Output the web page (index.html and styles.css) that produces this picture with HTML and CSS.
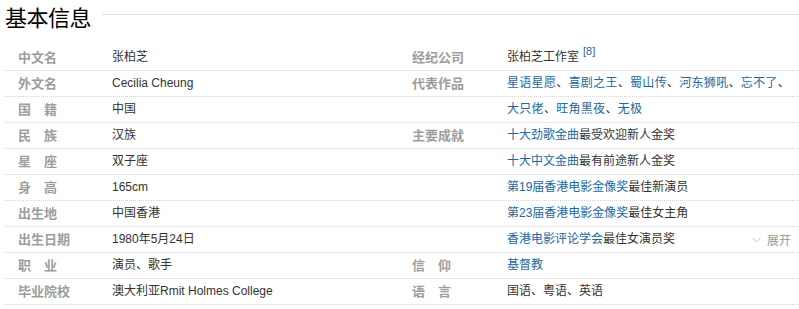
FILE: index.html
```html
<!DOCTYPE html>
<html lang="zh-CN">
<head>
<meta charset="utf-8">
<title>基本信息</title>
<link rel="stylesheet" href="styles.css">
</head>
<body>
<div class="page">
  <div class="head">
    <h2 class="title">基本信息</h2>
    <div class="head-line"></div>
  </div>
  <div class="info">
    <dl class="col col-left">
      <div class="row"><dt class="lbl">中文名</dt><dd class="val">张柏芝</dd></div>
      <div class="row"><dt class="lbl">外文名</dt><dd class="val">Cecilia Cheung</dd></div>
      <div class="row"><dt class="lbl sp">国籍</dt><dd class="val">中国</dd></div>
      <div class="row"><dt class="lbl sp">民族</dt><dd class="val">汉族</dd></div>
      <div class="row"><dt class="lbl sp">星座</dt><dd class="val">双子座</dd></div>
      <div class="row"><dt class="lbl sp">身高</dt><dd class="val">165cm</dd></div>
      <div class="row"><dt class="lbl">出生地</dt><dd class="val">中国香港</dd></div>
      <div class="row"><dt class="lbl">出生日期</dt><dd class="val">1980年5月24日</dd></div>
      <div class="row"><dt class="lbl sp">职业</dt><dd class="val">演员、歌手</dd></div>
      <div class="row"><dt class="lbl">毕业院校</dt><dd class="val">澳大利亚Rmit Holmes College</dd></div>
    </dl>
    <dl class="col col-right">
      <div class="row"><dt class="lbl">经纪公司</dt><dd class="val">张柏芝工作室<sup class="ref">[8]</sup></dd></div>
      <div class="row"><dt class="lbl">代表作品</dt><dd class="val wide"><a class="lnk">星语星愿</a>、<a class="lnk">喜剧之王</a>、<a class="lnk">蜀山传</a>、<a class="lnk">河东狮吼</a>、<a class="lnk">忘不了</a>、</dd></div>
      <div class="row"><dt class="lbl"></dt><dd class="val wide"><a class="lnk">大只佬</a>、<a class="lnk">旺角黑夜</a>、<a class="lnk">无极</a></dd></div>
      <div class="row"><dt class="lbl">主要成就</dt><dd class="val"><a class="lnk">十大劲歌金曲</a>最受欢迎新人金奖</dd></div>
      <div class="row"><dt class="lbl"></dt><dd class="val"><a class="lnk">十大中文金曲</a>最有前途新人金奖</dd></div>
      <div class="row"><dt class="lbl"></dt><dd class="val"><a class="lnk">第19届香港电影金像奖</a>最佳新演员</dd></div>
      <div class="row"><dt class="lbl"></dt><dd class="val"><a class="lnk">第23届香港电影金像奖</a>最佳女主角</dd></div>
      <div class="row"><dt class="lbl"></dt><dd class="val"><a class="lnk">香港电影评论学会</a>最佳女演员奖</dd>
        <span class="more"><svg class="chev" width="9" height="6" viewBox="0 0 9 6"><polyline points="0.5,0.8 4.5,4.6 8.5,0.8" fill="none" stroke="#c4c4c4" stroke-width="1"/></svg>展开</span>
      </div>
      <div class="row"><dt class="lbl sp">信仰</dt><dd class="val"><a class="lnk">基督教</a></dd></div>
      <div class="row"><dt class="lbl sp">语言</dt><dd class="val">国语、粤语、英语</dd></div>
    </dl>
  </div>
</div>
</body>
</html>
```

FILE: styles.css
```css
html, body {
  margin: 0;
  padding: 0;
  background: #fff;
}
.page {
  width: 799px;
  overflow: hidden;
  font-family: "Liberation Sans", "Noto Sans CJK SC", sans-serif;
  font-size: 12px;
  color: #333;
}
.head {
  display: flex;
  align-items: center;
  height: 32px;
  padding-left: 5px;
  margin-bottom: 13px;
}
.title {
  margin: 0;
  font-family: "Noto Sans CJK SC", sans-serif;
  font-size: 22px;
  font-weight: 400;
  line-height: 28px;
  color: #000;
  letter-spacing: -0.5px;
}
.head-line {
  flex: 1;
  height: 0;
  border-top: 1px solid #e3e3e3;
  margin-left: 11px;
  margin-top: -3px;
}
.info {
  display: grid;
  grid-template-columns: 395px 1fr;
  padding-left: 5px;
}
.col {
  margin: 0;
  display: flex;
  flex-direction: column;
}
.row {
  position: relative;
  display: flex;
  height: 25px;
  line-height: 25px;
  border-bottom: 1px dotted #d6d6d6;
  white-space: nowrap;
}
.lbl {
  box-sizing: border-box;
  width: 107px;
  flex: none;
  padding-left: 13px;
  font-family: "Noto Sans CJK SC", sans-serif;
  font-size: 13px;
  font-weight: 700;
  line-height: 23px;
  color: #9d9d9d;
}
.col-right .lbl {
  padding-left: 12px;
}
.lbl.sp {
  letter-spacing: 13px;
}
.val {
  margin: 0;
  color: #333;
}
.val.wide {
  letter-spacing: 0.3px;
}
.lnk {
  color: #2268a0;
  text-decoration: none;
}
.ref {
  font-size: 11px;
  color: #2268a0;
  vertical-align: top;
  line-height: 14px;
  margin-left: 4px;
  position: relative;
  top: -1px;
}
.more {
  position: absolute;
  right: 8px;
  top: 0;
  color: #999;
  font-family: "Noto Sans CJK SC", sans-serif;
  font-size: 12px;
  display: flex;
  align-items: center;
}
.chev {
  margin-right: 6px;
  margin-top: 1px;
}
```
